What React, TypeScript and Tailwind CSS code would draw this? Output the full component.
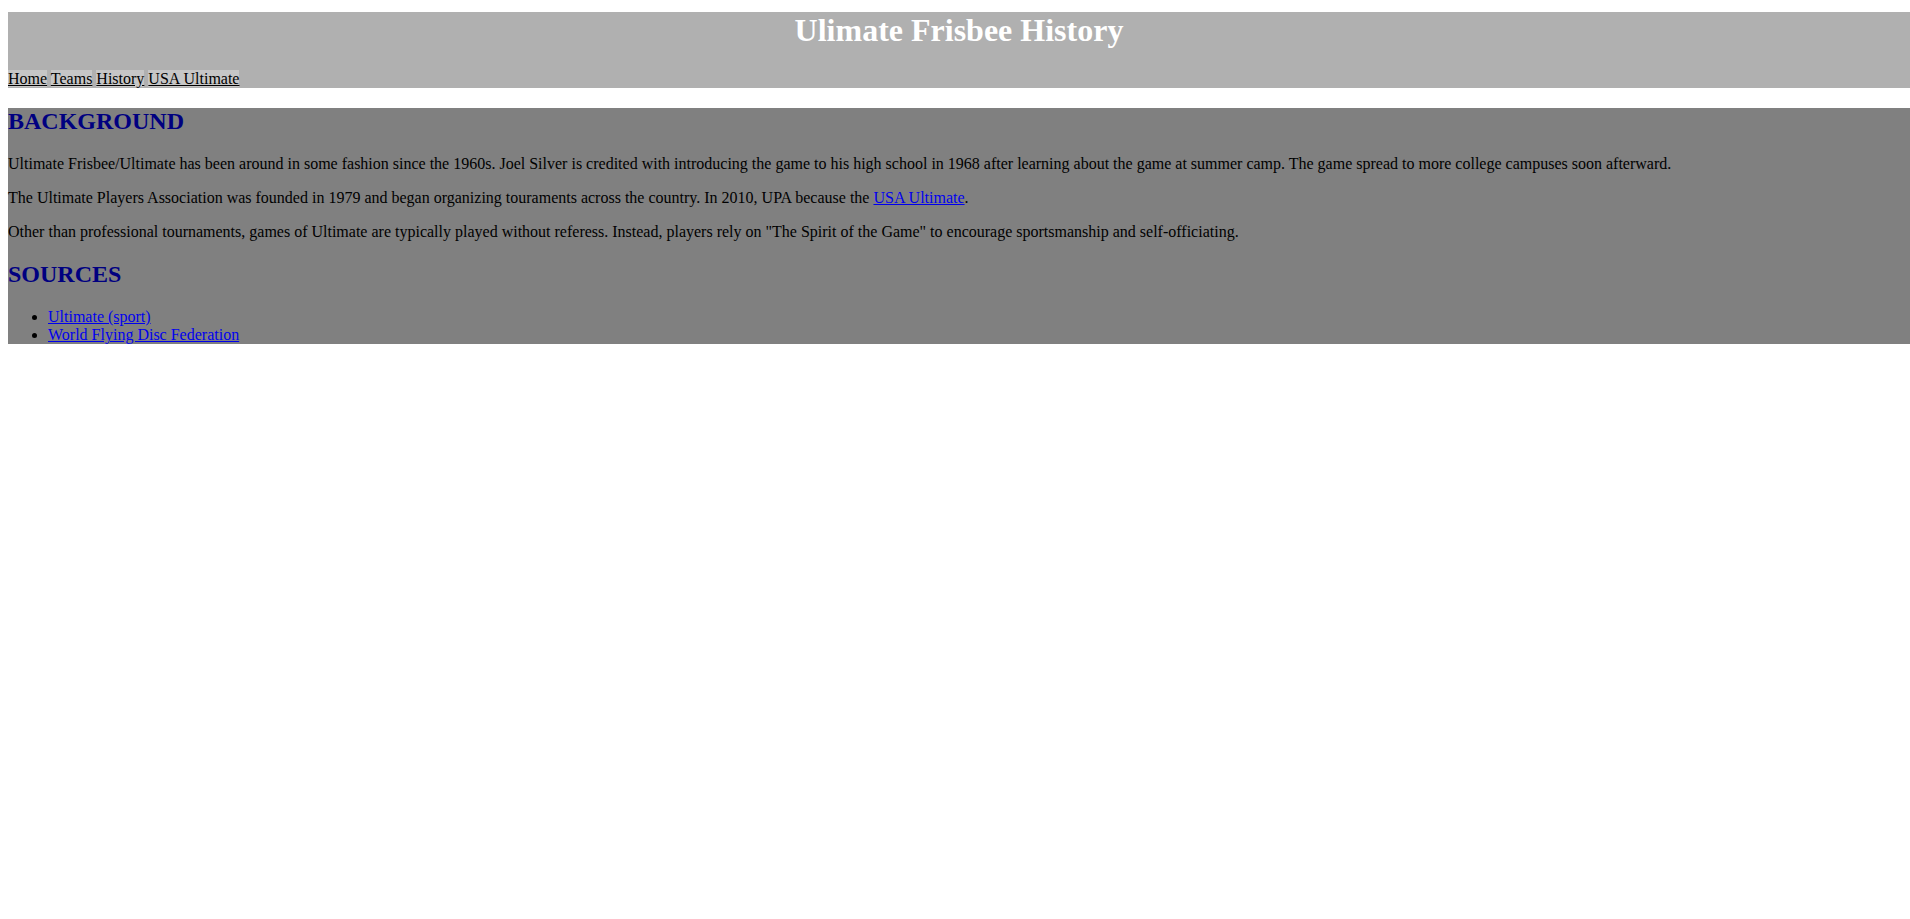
const navLinks = ["Home", "Teams", "History", "USA Ultimate"];

const sources = ["Ultimate (sport)", "World Flying Disc Federation"];

const App = () => {
    return (
        <div className="min-h-screen bg-white pt-[12px] pl-[8px] font-['Liberation_Serif','Times_New_Roman',serif] text-[16px] leading-[normal] text-black">
            <header className="bg-[#b0b0b0]">
                <h1 className="text-center text-[32px] font-bold text-white mb-[21.44px]">Ulimate Frisbee History</h1>
                <nav>
                    {navLinks.map((label, i) => (
                        <span key={label}>
                            <a href="#" className="bg-[#c6c6c6] text-black underline">{label}</a>
                            {i < navLinks.length - 1 ? " " : ""}
                        </span>
                    ))}
                </nav>
            </header>

            <main className="mt-[20px] bg-[#808080]">
                <h2 className="text-[24px] font-bold text-[#000080] mb-[19.92px]">BACKGROUND</h2>
                <p className="mb-4">
                    Ultimate Frisbee/Ultimate has been around in some fashion since the 1960s. Joel Silver is credited with introducing the game to his high school in 1968 after learning about the game at summer camp. The game spread to more college campuses soon afterward.
                </p>
                <p className="mb-4">
                    The Ultimate Players Association was founded in 1979 and began organizing touraments across the country. In 2010, UPA because the{" "}
                    <a href="#" className="text-[#0000ee] underline">USA Ultimate</a>.
                </p>
                <p>
                    Other than professional tournaments, games of Ultimate are typically played without referess. Instead, players rely on "The Spirit of the Game" to encourage sportsmanship and self-officiating.
                </p>
                <h2 className="mt-[19.92px] text-[24px] font-bold text-[#000080]">SOURCES</h2>
                <ul className="mt-[19.92px] list-disc pl-10">
                    {sources.map((s) => (
                        <li key={s}>
                            <a href="#" className="text-[#0000ee] underline">{s}</a>
                        </li>
                    ))}
                </ul>
            </main>
        </div>
    );
};

export default App;
